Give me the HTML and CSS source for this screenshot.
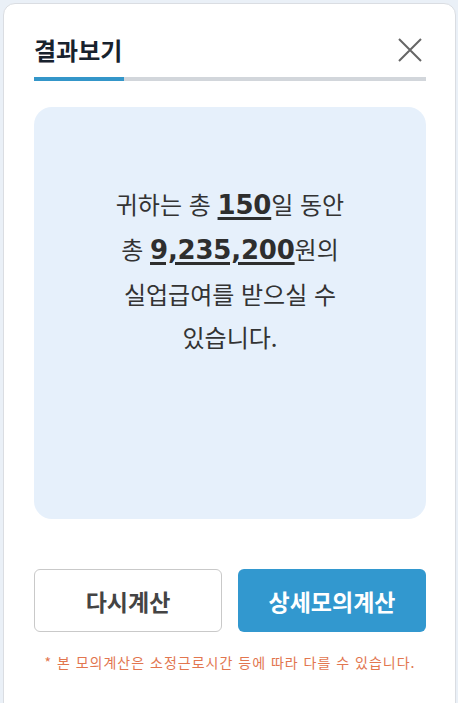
FILE: index.html
```html
<!DOCTYPE html>
<html lang="ko">
<head>
<meta charset="utf-8">
<title>결과보기</title>
<link rel="stylesheet" href="styles.css">
</head>
<body>
<div class="card">
  <div class="header">
    <h2 class="title">결과보기</h2>
    <button class="close" aria-label="닫기">
      <svg width="24" height="24" viewBox="0 0 24 24"><path d="M1 1L23 23M23 1L1 23" stroke="#666" stroke-width="2" fill="none"/></svg>
    </button>
  </div>
  <div class="progress"><div class="progress-fill" style="width:23%"></div></div>
  <div class="result">
    <p class="result-text">귀하는 총 <strong>150</strong>일 동안<br>총 <strong>9,235,200</strong>원의<br>실업급여를 받으실 수<br>있습니다.</p>
  </div>
  <div class="actions">
    <button class="btn btn-outline">다시계산</button>
    <button class="btn btn-primary">상세모의계산</button>
  </div>
  <p class="note">* 본 모의계산은 소정근로시간 등에 따라 다를 수 있습니다.</p>
</div>
</body>
</html>
```

FILE: styles.css
```css
html, body {
  margin: 0;
  padding: 0;
  background: #eaf0f7;
  overflow: hidden;
}
body {
  font-family: "Noto Sans CJK KR", "Noto Sans", sans-serif;
  height: 703px;
}
.card {
  margin: 3px 2px 0 3px;
  background: #fff;
  border: 1px solid #dadde2;
  border-radius: 12px;
  padding: 31px 29px 40px 30px;
  min-height: 720px;
  box-sizing: border-box;
}
.header {
  display: flex;
  justify-content: space-between;
  align-items: center;
  height: 30px;
}
.title {
  margin: 0;
  font-size: 24px;
  font-weight: 700;
  color: #18222e;
  line-height: 30px;
}
.close {
  border: 0;
  background: none;
  padding: 0;
  margin-right: 4px;
  width: 24px;
  height: 24px;
  display: flex;
}
.progress {
  margin-top: 12px;
  height: 4px;
  background: #d2d6db;
}
.progress-fill {
  height: 100%;
  background: #3496c9;
}
.result {
  margin-top: 26px;
  height: 412px;
  background: #e6f0fb;
  border-radius: 18px;
  box-sizing: border-box;
  padding-top: 75px;
}
.result-text {
  margin: 0;
  text-align: center;
  font-size: 24px;
  line-height: 43px;
  color: #333;
}
.result-text strong {
  font-family: "DejaVu Sans", sans-serif;
  font-weight: 700;
  font-size: 26px;
  text-decoration: underline;
  text-decoration-thickness: 3px;
  text-underline-offset: 3px;
  letter-spacing: -0.2px;
  color: #2e2e2e;
}
.actions {
  margin-top: 50px;
  display: grid;
  grid-template-columns: 1fr 1fr;
  gap: 16px;
}
.btn {
  height: 63px;
  border-radius: 6px;
  font-family: "Noto Sans CJK KR", sans-serif;
  font-size: 23px;
  font-weight: 700;
  cursor: pointer;
}
.btn-outline {
  background: #fff;
  border: 1px solid #c9c9c9;
  color: #444;
}
.btn-primary {
  background: #3298cf;
  border: 0;
  color: #fff;
}
.note {
  margin: 20px 0 0;
  text-align: center;
  font-size: 14px;
  letter-spacing: 1px;
  line-height: 20px;
  color: #e2764f;
}
```
